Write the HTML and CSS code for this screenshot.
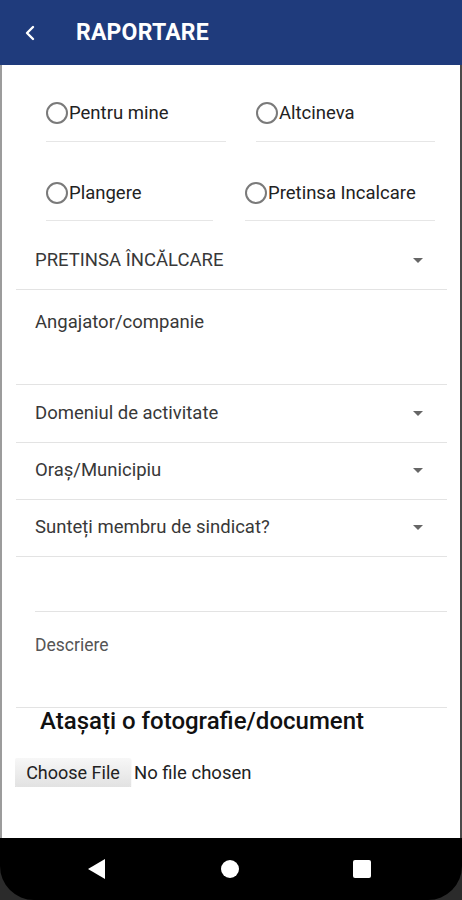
FILE: index.html
```html
<!DOCTYPE html>
<html lang="ro">
<head>
    <meta charset="UTF-8">
    <meta name="viewport" content="width=device-width, initial-scale=1.0">
    <title>Raportare</title>
    <link rel="stylesheet" href="styles.css">
</head>
<body>
    <div class="phone">
        <header class="app-bar">
            <svg class="back" width="12" height="16" viewBox="0 0 12 16">
                <path d="M9 2 L3 8 L9 14" fill="none" stroke="#fff" stroke-width="2.4" stroke-linecap="round" stroke-linejoin="round"/>
            </svg>
            <h1>RAPORTARE</h1>
        </header>

        <main class="content">
            <div class="radio-row row-one">
                <label class="radio"><span class="circle"></span>Pentru mine</label>
                <label class="radio"><span class="circle"></span>Altcineva</label>
            </div>
            <div class="radio-row row-two">
                <label class="radio"><span class="circle"></span>Plangere</label>
                <label class="radio"><span class="circle"></span>Pretinsa Incalcare</label>
            </div>

            <div class="field select first-select">
                <span>PRETINSA ÎNCĂLCARE</span>
                <span class="caret"></span>
            </div>
            <div class="field text-field">
                <span>Angajator/companie</span>
            </div>
            <div class="field select after-text">
                <span>Domeniul de activitate</span>
                <span class="caret"></span>
            </div>
            <div class="field select">
                <span>Oraș/Municipiu</span>
                <span class="caret"></span>
            </div>
            <div class="field select">
                <span>Sunteți membru de sindicat?</span>
                <span class="caret"></span>
            </div>
            <div class="field empty-field"></div>
            <div class="field description">
                <span>Descriere</span>
            </div>

            <h2 class="attach-title">Atașați o fotografie/document</h2>
            <div class="file-row">
                <input type="file" class="file-input">
            </div>
        </main>

        <nav class="nav-bar">
            <svg width="20" height="22" viewBox="0 0 20 22"><path d="M18 1 L18 21 L1 11 Z" fill="#fff"/></svg>
            <svg width="20" height="20" viewBox="0 0 20 20"><circle cx="10" cy="10" r="9" fill="#fff"/></svg>
            <svg width="18" height="18" viewBox="0 0 18 18"><rect x="0" y="0" width="18" height="18" rx="2" fill="#fff"/></svg>
        </nav>
    </div>
</body>
</html>
```

FILE: styles.css
```css
body {
    margin: 0;
    font-family: Roboto, "Liberation Sans", sans-serif;
    background: #2b2b2b;
}

.phone {
    width: 462px;
    height: 900px;
    display: flex;
    flex-direction: column;
    overflow: hidden;
}

.app-bar {
    height: 65px;
    background: #1f3b7c;
    display: flex;
    align-items: center;
    padding-left: 24px;
    box-sizing: border-box;
    flex-shrink: 0;
}

.app-bar h1 {
    margin: 0 0 0 40px;
    color: #fff;
    font-size: 23px;
    font-weight: 700;
    letter-spacing: 0.2px;
}

.content {
    flex: 1;
    background: #fff;
    border-left: 2px solid #9c9c9c;
    border-right: 2px solid #4a4a4a;
    display: flex;
    flex-direction: column;
}

.radio-row {
    display: flex;
    padding-left: 44px;
}

.row-one {
    margin-top: 36px;
    gap: 30px;
}

.row-one .radio:first-child { width: 180px; }
.row-one .radio:last-child { width: 179px; }

.row-two {
    margin-top: 39px;
    gap: 32px;
}

.row-two .radio:first-child { width: 167px; }
.row-two .radio:last-child { width: 190px; }

.radio {
    display: flex;
    align-items: center;
    height: 24px;
    padding-bottom: 16px;
    border-bottom: 1px solid #e6e6e6;
    font-size: 18.5px;
    color: #222;
}

.row-two .radio {
    padding-bottom: 15px;
}

.circle {
    width: 18px;
    height: 18px;
    border: 2px solid #7a7a7a;
    border-radius: 50%;
    margin-right: 1px;
    flex-shrink: 0;
}

.field {
    margin: 0 13px 0 14px;
    padding-left: 19px;
    padding-right: 24px;
    border-bottom: 1px solid #e3e3e3;
    font-size: 18.5px;
    line-height: 24px;
    color: #383838;
    display: flex;
    align-items: center;
    justify-content: space-between;
}

.select {
    padding-top: 15px;
    padding-bottom: 17px;
}

.select.after-text {
    padding-top: 16px;
}

.first-select {
    padding-top: 27px;
    padding-bottom: 17px;
}

.text-field {
    padding-top: 20px;
    padding-bottom: 50px;
}

.caret {
    width: 0;
    height: 0;
    border-left: 5px solid transparent;
    border-right: 5px solid transparent;
    border-top: 5px solid #666;
}

.empty-field {
    margin-left: 33px;
    padding: 0;
    height: 54px;
}

.description {
    padding-top: 23px;
    padding-bottom: 52px;
    font-size: 17.5px;
    line-height: 20px;
    color: #555;
}

.attach-title {
    margin: 0 0 0 38px;
    font-size: 24px;
    font-weight: 500;
    line-height: 26px;
    color: #111;
}

.file-row {
    margin: 24px 0 0 13px;
}

.file-input {
    font-family: Roboto, "Liberation Sans", sans-serif;
    font-size: 18.5px;
    color: #222;
}

.file-input::file-selector-button {
    font-family: Roboto, "Liberation Sans", sans-serif;
    font-size: 18px;
    color: #222;
    height: 29px;
    width: 116px;
    padding: 0;
    margin-right: 3px;
    border: none;
    border-radius: 2px;
    background: linear-gradient(#f7f7f7, #e2e2e2);
    box-shadow: 0 1px 1px rgba(0,0,0,0.25);
}

.nav-bar {
    height: 62px;
    background: #000;
    border-radius: 0 0 34px 34px;
    display: flex;
    align-items: center;
    justify-content: space-between;
    padding: 0 91px 0 87px;
    flex-shrink: 0;
}
```
